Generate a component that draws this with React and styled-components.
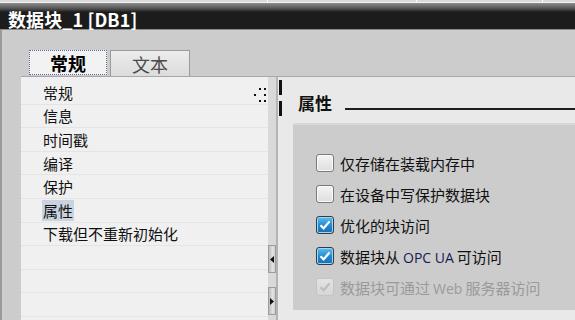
import React from "react";
import styled, { createGlobalStyle, css } from "styled-components";

const Global = createGlobalStyle`
  html, body { margin: 0; padding: 0; background: #cccccc; overflow: hidden; }
  * { box-sizing: border-box; }
`;

const CJK = `"Noto Sans CJK SC", "Noto Sans", sans-serif`;

const Window = styled.div`
  width: 575px;
  height: 320px;
  display: flex;
  flex-direction: column;
  font-family: ${CJK};
  overflow: hidden;
`;

const TopStrip = styled.div`
  height: 3px;
  display: flex;
  background: #dadada;
  border-bottom: 1px solid #f4f4f4;
`;

const StripSeg = styled.div`
  width: ${(p) => p.w}px;
  border-right: 1px solid #ffffff;
`;

const TitleBar = styled.div`
  height: 27px;
  display: flex;
  align-items: flex-end;
  padding: 0 0 0 8px;
  background: linear-gradient(#8c8c8c 0, #5a5a5a 5px, #2e2e2e 8px, #1c1c1c 9px, #1c1c1c 100%);
  border-bottom: 1px solid #8a8a8a;
  color: #ffffff;
  font-size: 18px;
  font-weight: bold;
  line-height: 20px;
  letter-spacing: 0.1px;
`;

const Body = styled.div`
  flex: 1;
  display: flex;
  flex-direction: column;
  background: #cccccc;
  box-shadow: inset 2px 0 0 #9a9a9a;
  padding-left: 21px;
  min-height: 0;
`;

const TabRow = styled.div`
  height: 47px;
  display: flex;
  align-items: flex-end;
  padding-left: 8px;
  gap: 3px;
  border-bottom: 1px solid #a8a8a8;
`;

const Tab = styled.div`
  width: ${(p) => (p.active ? 78 : 80)}px;
  height: ${(p) => (p.active ? 25 : 26)}px;
  display: flex;
  align-items: center;
  justify-content: center;
  font-size: 18px;
  line-height: 20px;
  ${(p) =>
    p.active
      ? css`
          background: #f2f2f2;
          border: 1px dotted #5a6aa8;
          font-weight: bold;
          color: #000;
          margin-bottom: 1px;
        `
      : css`
          background: linear-gradient(#ececec, #dcdcdc);
          border: 1px solid #9a9a9a;
          border-bottom: none;
          color: #4a4a4a;
        `}
`;

const Content = styled.div`
  flex: 1;
  display: flex;
  min-height: 0;
`;

const List = styled.div`
  width: 247px;
  background: #f0f0f0;
  display: flex;
  flex-direction: column;
  padding-top: 4px;
  position: relative;
`;

const ListRow = styled.div`
  height: 23.6px;
  flex: none;
  border-bottom: 1px solid #e4e4e4;
  padding-left: 21px;
  display: flex;
  align-items: center;
  font-size: 15px;
  color: #111;
`;

const ListLabel = styled.span`
  padding: 0 1px;
  line-height: 21px;
  background: ${(p) => (p.selected ? "#c9d3df" : "transparent")};
`;

const Grip = styled.svg`
  position: absolute;
  left: 233px;
  top: 11px;
`;

const Splitter = styled.div`
  width: 8px;
  background: #d9d9d9;
  display: flex;
  flex-direction: column;
  padding-top: 168px;
  gap: 14px;
`;

const ScrollBtn = styled.div`
  height: 28px;
  width: 8px;
  background: linear-gradient(90deg, #bcbcbc, #e2e2e2 60%, #cfcfcf);
  border: 1px solid #9c9c9c;
  display: flex;
  align-items: center;
  justify-content: center;
`;

const Divider = styled.div`
  width: 6px;
  background: #eaeaea;
  border-left: 2px solid #b4b4b4;
  display: flex;
  flex-direction: column;
  padding-top: 3px;
  gap: 6px;
`;

const DividerMark = styled.div`
  width: 3px;
  height: 15px;
  background: #111;
  margin-left: 1px;
`;

const RightPanel = styled.div`
  flex: 1;
  background: #e9e9e9;
  display: flex;
  flex-direction: column;
  padding-left: 11px;
  min-width: 0;
`;

const SectionHead = styled.div`
  height: 46px;
  display: flex;
  align-items: center;
  gap: 13px;
  padding-left: 5px;
  padding-top: 4px;
`;

const SectionTitle = styled.div`
  font-size: 17px;
  font-weight: bold;
  color: #111;
`;

const SectionLine = styled.div`
  flex: 1;
  height: 2px;
  background: #1e1e1e;
  margin-top: 14px;
`;

const Group = styled.div`
  height: 187px;
  background: #cccccc;
  border-top: 2px solid #d8d8d8;
  padding: 29px 0 0 23px;
  display: flex;
  flex-direction: column;
  gap: 13px;
`;

const Row = styled.label`
  display: flex;
  align-items: center;
  gap: 6px;
  height: 18px;
  font-size: 15px;
  color: ${(p) => (p.disabled ? "#9a9a9a" : "#111")};
  white-space: nowrap;
`;

const Box = styled.span`
  width: 18px;
  height: 18px;
  border-radius: 3px;
  display: flex;
  align-items: center;
  justify-content: center;
  flex: none;
  ${(p) =>
    p.disabled
      ? css`
          border: 1px solid #c4c4c4;
          background: linear-gradient(#e4e4e4, #d6d6d6);
        `
      : p.checked
      ? css`
          border: 1px solid #3a3a3a;
          background: linear-gradient(#5cc0f0, #1e86d2 55%, #1870b8);
          box-shadow: inset 0 0 0 1px #9fd8f5;
        `
      : css`
          border: 1px solid #7a7a7a;
          background: linear-gradient(#f4f4f4, #dedede);
          box-shadow: inset 0 0 0 1px #fafafa;
        `}
`;

const Latin = styled.span`
  font-family: "Open Sans", "DejaVu Sans", sans-serif;
  font-size: 14px;
  color: ${(p) => (p.disabled ? "#9a9a9a" : "#1a1a55")};
  margin: 0 3px;
`;

const Check = ({ color }) => (
  <svg width="12" height="12" viewBox="0 0 12 12">
    <path d="M1.5 6.2 L4.6 9.3 L10.6 2.4" fill="none" stroke={color} strokeWidth="2.2" />
  </svg>
);

const Arrow = ({ dir }) => (
  <svg width="4" height="7" viewBox="0 0 4 7">
    <path d={dir === "left" ? "M4 0 L0 3.5 L4 7 Z" : "M0 0 L4 3.5 L0 7 Z"} fill="#111" />
  </svg>
);

const items = ["常规", "信息", "时间戳", "编译", "保护", "属性", "下载但不重新初始化", "", "", ""];

const options = [
  { text: ["仅存储在装载内存中"] },
  { text: ["在设备中写保护数据块"] },
  { text: ["优化的块访问"], checked: true },
  { text: ["数据块从", "OPC UA", "可访问"], checked: true },
  { text: ["数据块可通过", "Web", "服务器访问"], checked: true, disabled: true },
];

export default function App() {
  return (
    <Window>
      <Global />
      <TopStrip>
        <StripSeg w={268} />
        <StripSeg w={149} />
        <StripSeg w={126} />
      </TopStrip>
      <TitleBar>数据块_1 [DB1]</TitleBar>
      <Body>
        <TabRow>
          <Tab active>常规</Tab>
          <Tab>文本</Tab>
        </TabRow>
        <Content>
          <List>
            {items.map((t, i) => (
              <ListRow key={i}>
                {t && <ListLabel selected={t === "属性"}>{t}</ListLabel>}
              </ListRow>
            ))}
            <Grip width="13" height="15" viewBox="0 0 13 15">
              <rect x="5" y="0" width="2" height="2" fill="#111" />
              <rect x="10" y="0" width="2" height="2" fill="#111" />
              <rect x="0" y="6" width="2" height="2" fill="#111" />
              <rect x="10" y="6" width="2" height="2" fill="#111" />
              <rect x="5" y="12" width="2" height="2" fill="#111" />
              <rect x="10" y="12" width="2" height="2" fill="#111" />
            </Grip>
          </List>
          <Splitter>
            <ScrollBtn><Arrow dir="left" /></ScrollBtn>
            <ScrollBtn><Arrow dir="right" /></ScrollBtn>
          </Splitter>
          <Divider>
            <DividerMark />
            <DividerMark />
          </Divider>
          <RightPanel>
            <SectionHead>
              <SectionTitle>属性</SectionTitle>
              <SectionLine />
            </SectionHead>
            <Group>
              {options.map((o, i) => (
                <Row key={i} disabled={o.disabled}>
                  <Box checked={o.checked} disabled={o.disabled}>
                    {o.checked && <Check color={o.disabled ? "#bdbdbd" : "#ffffff"} />}
                  </Box>
                  <span>
                    {o.text[0]}
                    {o.text[1] && <Latin disabled={o.disabled}>{o.text[1]}</Latin>}
                    {o.text[2]}
                  </span>
                </Row>
              ))}
            </Group>
          </RightPanel>
        </Content>
      </Body>
    </Window>
  );
}
